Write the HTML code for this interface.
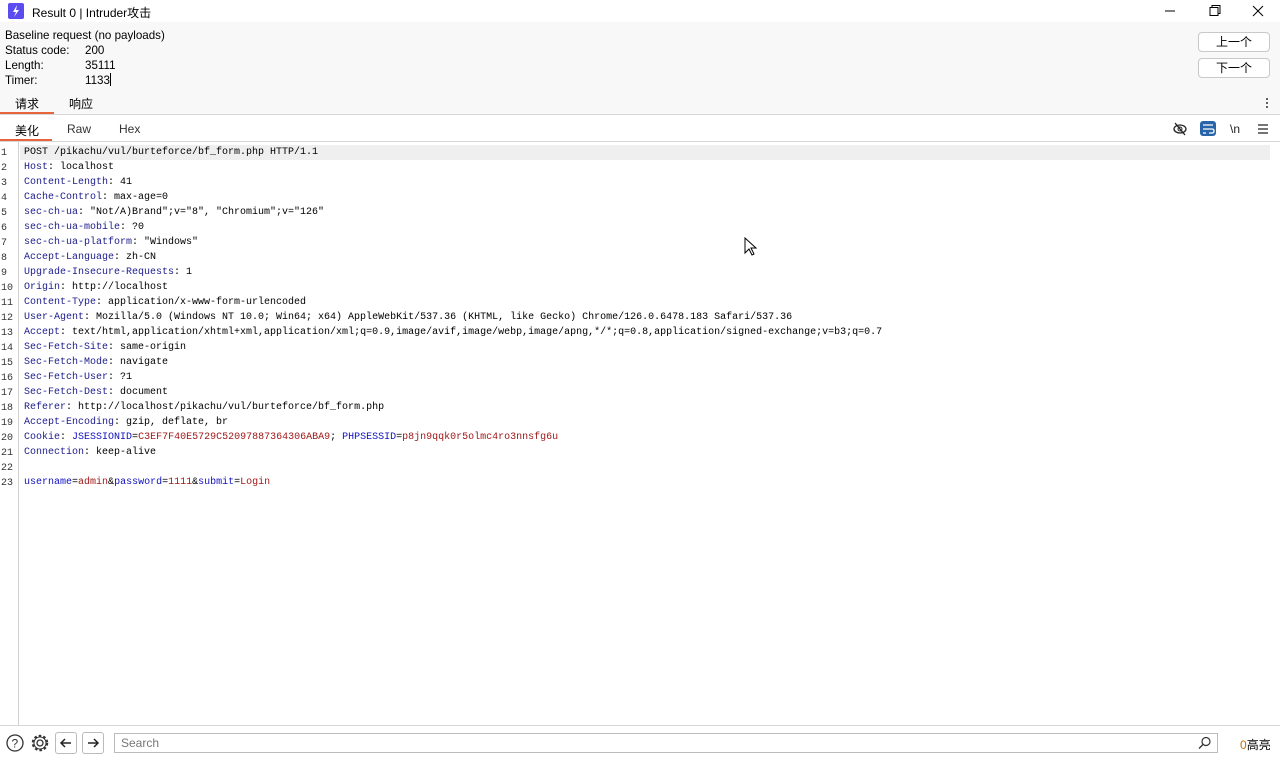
<!DOCTYPE html>
<html><head><meta charset="utf-8"><style>
*{margin:0;padding:0;box-sizing:border-box}
body{width:1280px;height:760px;overflow:hidden;background:#fff;font-family:"Liberation Sans","Noto Sans CJK SC",sans-serif;font-size:12px;color:#000;position:relative}
.abs{position:absolute}
.title{top:0;left:0;width:1280px;height:22px;background:#fff}
.hdr{top:22px;left:0;width:1280px;height:93px;background:#f8f8f8;border-bottom:1px solid #d8d8d8}
.btn{position:absolute;left:1198px;width:72px;height:20px;border:1px solid #c8c8c8;border-radius:4px;background:#fff;text-align:center;line-height:18px;font-size:12px}
.tab2{top:115px;left:0;width:1280px;height:27px;background:#fff;border-bottom:1px solid #d8d8d8}
.code{top:142px;left:0;width:1280px;height:583px}
.gut{position:absolute;left:0;top:0;width:19px;height:583px;border-right:1px solid #d0d0d0}
.ln{position:absolute;left:0;width:17px;font-family:"Liberation Mono",monospace;font-size:10px;color:#333;text-align:left;padding-left:1px}
.l{position:absolute;left:24px;font-family:"Liberation Mono","Noto Serif CJK SC",monospace;font-size:10px;white-space:pre;line-height:15px}
.k{color:#1c1c8c}.r{color:#a01818}.b{color:#1010c0}
.foot{top:725px;left:0;width:1280px;height:35px;background:#fff;border-top:1px solid #d8d8d8}
</style></head><body>
<div class="abs title">
 <div class="abs" style="left:8px;top:3px;width:16px;height:16px;background:#5b4cf0;border-radius:2px"><svg width="16" height="16" viewBox="0 0 16 16"><path d="M9 2 L5 9 H8 L6 14 L11 7 H8 Z" fill="#fff"/></svg></div>
 <div class="abs" style="left:32px;top:4px;font-size:12px">Result 0 | Intruder攻击</div>
 <svg class="abs" style="left:1160px;top:0" width="120" height="22"><path d="M5 11 H15" stroke="#000"/><rect x="50" y="7.5" width="8" height="8" fill="none" stroke="#000"/><path d="M52 7.5 V5.5 H60 V13.5 H58" fill="none" stroke="#000"/><path d="M93 6 L103 16 M103 6 L93 16" stroke="#000"/></svg>
</div>
<div class="abs hdr">
 <div class="abs" style="left:5px;top:6px;line-height:15px;font-size:11.6px">Baseline request (no payloads)<br>Status code:<br>Length:<br>Timer:</div>
 <div class="abs" style="left:85px;top:21px;line-height:15px;font-size:11.6px">200<br>35111<br>1133<span style="display:inline-block;width:1px;height:13px;background:#000;vertical-align:-2px"></span></div>
 <div class="btn" style="top:10px">上一个</div>
 <div class="btn" style="top:36px">下一个</div>
 <div class="abs" style="left:1266px;top:75px;width:2px;height:12px;background:radial-gradient(circle,#555 1px,transparent 1.2px) 0 0/2px 4px"></div>
 <div class="abs" style="left:15px;top:73px">请求</div>
 <div class="abs" style="left:69px;top:73px">响应</div>
 <div class="abs" style="left:0;top:90px;width:54px;height:2px;background:#e8643c"></div>
</div>
<div class="abs tab2">
 <div class="abs" style="left:15px;top:7px">美化</div>
 <div class="abs" style="left:67px;top:7px;color:#333">Raw</div>
 <div class="abs" style="left:119px;top:7px;color:#333">Hex</div>
 <div class="abs" style="left:0;top:24px;width:52px;height:2px;background:#e8643c"></div>
 <svg class="abs" style="left:1172px;top:6px" width="100" height="16"><ellipse cx="8" cy="8" rx="6" ry="4" fill="none" stroke="#222" stroke-width="1.3"/><circle cx="8" cy="8" r="2" fill="none" stroke="#222"/><path d="M3 2 L13 14" stroke="#222" stroke-width="1.3"/>
 <rect x="28" y="0" width="16" height="15" rx="3" fill="#2a64a8"/><path d="M31 4 H41 M31 8 H40 Q42 8 42 10 Q42 12 40 12 H37 M31 12 H34" stroke="#fff" stroke-width="1.3" fill="none"/>
 <text x="58" y="12" font-family="Liberation Sans" font-size="12" fill="#222">\n</text>
 <path d="M86 4 H96 M86 8 H96 M86 12 H96" stroke="#222" stroke-width="1.3"/></svg>
</div>
<div class="abs code">
 <div class="gut"></div>
 <div class="abs" style="left:20px;top:3px;width:1250px;height:15px;background:#efefef"></div>
 <div class="ln" style="top:6px">1</div><div class="ln" style="top:21px">2</div><div class="ln" style="top:36px">3</div><div class="ln" style="top:51px">4</div><div class="ln" style="top:66px">5</div><div class="ln" style="top:81px">6</div><div class="ln" style="top:96px">7</div><div class="ln" style="top:111px">8</div><div class="ln" style="top:126px">9</div><div class="ln" style="top:141px">10</div><div class="ln" style="top:156px">11</div><div class="ln" style="top:171px">12</div><div class="ln" style="top:186px">13</div><div class="ln" style="top:201px">14</div><div class="ln" style="top:216px">15</div><div class="ln" style="top:231px">16</div><div class="ln" style="top:246px">17</div><div class="ln" style="top:261px">18</div><div class="ln" style="top:276px">19</div><div class="ln" style="top:291px">20</div><div class="ln" style="top:306px">21</div><div class="ln" style="top:321px">22</div><div class="ln" style="top:336px">23</div>
 <div class="l" style="top:3px">POST /pikachu/vul/burteforce/bf_form.php HTTP/1.1
<span class="k">Host</span>: localhost
<span class="k">Content-Length</span>: 41
<span class="k">Cache-Control</span>: max-age=0
<span class="k">sec-ch-ua</span>: "Not/A)Brand";v="8", "Chromium";v="126"
<span class="k">sec-ch-ua-mobile</span>: ?0
<span class="k">sec-ch-ua-platform</span>: "Windows"
<span class="k">Accept-Language</span>: zh-CN
<span class="k">Upgrade-Insecure-Requests</span>: 1
<span class="k">Origin</span>: http://localhost
<span class="k">Content-Type</span>: application/x-www-form-urlencoded
<span class="k">User-Agent</span>: Mozilla/5.0 (Windows NT 10.0; Win64; x64) AppleWebKit/537.36 (KHTML, like Gecko) Chrome/126.0.6478.183 Safari/537.36
<span class="k">Accept</span>: text/html,application/xhtml+xml,application/xml;q=0.9,image/avif,image/webp,image/apng,*/*;q=0.8,application/signed-exchange;v=b3;q=0.7
<span class="k">Sec-Fetch-Site</span>: same-origin
<span class="k">Sec-Fetch-Mode</span>: navigate
<span class="k">Sec-Fetch-User</span>: ?1
<span class="k">Sec-Fetch-Dest</span>: document
<span class="k">Referer</span>: http://localhost/pikachu/vul/burteforce/bf_form.php
<span class="k">Accept-Encoding</span>: gzip, deflate, br
<span class="k">Cookie</span>: <span class="b">JSESSIONID</span>=<span class="r">C3EF7F40E5729C52097887364306ABA9</span>; <span class="b">PHPSESSID</span>=<span class="r">p8jn9qqk0r5olmc4ro3nnsfg6u</span>
<span class="k">Connection</span>: keep-alive

<span class="b">username</span>=<span class="r">admin</span>&amp;<span class="b">password</span>=<span class="r">1111</span>&amp;<span class="b">submit</span>=<span class="r">Login</span></div>
 <svg class="abs" style="left:744px;top:95px" width="14" height="20"><path d="M1 1 V16 L5 12 L8 18 L10 17 L7 11 H12 Z" fill="#fff" stroke="#000"/></svg>
</div>
<div class="abs foot">
 <svg class="abs" style="left:5px;top:7px" width="100" height="22"><circle cx="10" cy="10" r="8" fill="none" stroke="#333" stroke-width="1.3"/><text x="6.5" y="14.5" font-size="12" font-family="Liberation Sans" fill="#333">?</text>
 <circle cx="35" cy="10" r="3" fill="none" stroke="#333" stroke-width="1.3"/><circle cx="35" cy="10" r="7" fill="none" stroke="#333" stroke-width="2.5" stroke-dasharray="2.5 2"/><circle cx="35" cy="10" r="6" fill="none" stroke="#333" stroke-width="1"/></svg>
 <div class="abs" style="left:55px;top:6px;width:22px;height:22px;border:1px solid #bbb;border-radius:3px"><svg width="20" height="20"><path d="M15 10 H5 M9 6 L5 10 L9 14" stroke="#222" stroke-width="1.5" fill="none"/></svg></div>
 <div class="abs" style="left:82px;top:6px;width:22px;height:22px;border:1px solid #bbb;border-radius:3px"><svg width="20" height="20"><path d="M5 10 H15 M11 6 L15 10 L11 14" stroke="#222" stroke-width="1.5" fill="none"/></svg></div>
 <div class="abs" style="left:114px;top:7px;width:1104px;height:20px;border:1px solid #bbb;color:#777;padding-left:6px;line-height:18px">Search</div>
 <svg class="abs" style="left:1198px;top:10px" width="14" height="14"><circle cx="8" cy="5.5" r="4" fill="none" stroke="#333" stroke-width="1.2"/><path d="M5 8.5 L1 12.5" stroke="#333" stroke-width="1.3"/></svg>
 <div class="abs" style="left:1240px;top:10px"><span style="color:#c07000">0</span>高亮</div>
</div>
</body></html>
